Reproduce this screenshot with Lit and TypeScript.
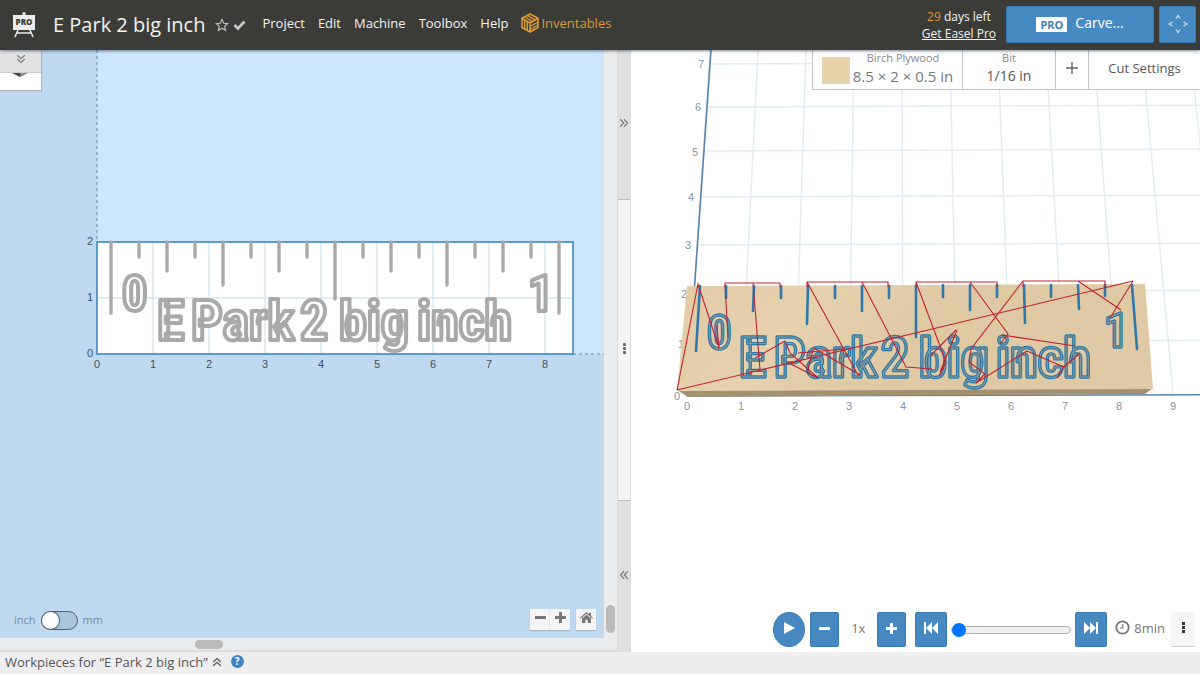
import { LitElement, html, svg, css } from "lit";
import { customElement, property, state } from "lit/decorators.js";

type Line = [number, number, number, number];
type Label = [number, number, string];

const range = (n: number) => Array.from({ length: n }, (_, i) => i);

const chevrons = (turn: number) => html`<svg width="10" height="10" viewBox="0 0 10 10" aria-hidden="true">
  <g transform="rotate(${turn} 5 5)" fill="none" stroke="currentColor" stroke-width="1.2">
    <path d="M1.2 1.2 5 4.6 8.8 1.2M1.2 5 5 8.4 8.8 5" />
  </g>
</svg>`;

/* Flat drawing of the workpiece, 56px to the inch. */
@customElement("design-canvas")
export class DesignCanvas extends LitElement {
  static styles = css`
    :host {
      display: block;
      overflow: hidden;
    }
    svg {
      display: block;
      width: 100%;
      height: 100%;
    }
    .axis {
      font: 11px "Liberation Sans", sans-serif;
      fill: #3d5165;
      text-anchor: middle;
    }
    .letters {
      font-family: "Liberation Sans Narrow", "Roboto Condensed", "Open Sans Condensed", sans-serif;
      font-weight: 700;
      fill: #fff;
      stroke: #a9a9a9;
      stroke-width: 4;
      stroke-linejoin: round;
    }
  `;

  private ticks = [71, 15, 29, 15, 43, 15, 29, 15, 57, 15, 29, 15, 43, 15, 29, 15, 71];
  private words: Label[] = [
    [60, 98, "E"],
    [94, 98, "Park"],
    [203, 98, "2"],
    [242, 98, "big"],
    [320, 98, "inch"],
  ];

  render() {
    return html`<svg role="img" aria-label="Design">
      <g transform="translate(97 192)">
        <rect x="0" y="-192" width="2000" height="304" fill="#cce6fd" />
        <rect x="0" y="0" width="476" height="112" fill="#fff" />
        <path d="M0 56H476" stroke="#c4d9ea" />
        ${range(8).map((i) => svg`<path d="M${(i + 1) * 56} 0V112" stroke="#c4dff2" />`)}
        <path d="M0 -192V0M476 112H2000" fill="none" stroke="#5d8fb8" stroke-dasharray="3 3" />
        <rect x="0" y="0" width="476" height="112" fill="none" stroke="#3f88bd" stroke-width="1.6" />
        ${this.ticks.map(
          (len, i) =>
            svg`<path d="M${14 + i * 28} 0v${len}" stroke="#a9a9a9" stroke-width="3.4" stroke-linecap="round" />`
        )}
        <g class="letters" font-size="56">
          ${this.words.map(([x, y, t]) => svg`<text x=${x} y=${y}>${t}</text>`)}
        </g>
        <g class="letters" font-size="50">
          <text x="25" y="69">0</text>
          <text x="431" y="69">1</text>
        </g>
        <g class="axis">
          ${range(9).map((i) => svg`<text x=${i * 56} y="126">${i}</text>`)}
          ${range(3).map((i) => svg`<text x="-7" y=${115 - i * 56}>${i}</text>`)}
        </g>
      </g>
    </svg>`;
  }
}

/* Perspective view of the stock with its toolpaths. */
@customElement("carve-preview")
export class CarvePreview extends LitElement {
  static styles = css`
    :host {
      display: block;
      overflow: hidden;
    }
    svg {
      display: block;
      width: 100%;
      height: 100%;
    }
    .axis {
      font: 11px "Liberation Sans", sans-serif;
      fill: #8496a9;
      text-anchor: middle;
    }
    .cut,
    .groove {
      font-family: "Liberation Sans Narrow", "Roboto Condensed", "Open Sans Condensed", sans-serif;
      font-weight: 700;
      fill: none;
      stroke-linejoin: round;
    }
    .cut {
      stroke: #2b76a6;
      stroke-width: 3.4;
    }
    .groove {
      stroke: #8a9c9c;
      stroke-width: 1;
    }
  `;

  private rows = [14, 57, 101, 147, 195, 242, 292];
  private sideLabels: Label[] = [
    [70, 18, "7"],
    [67, 61, "6"],
    [64, 106, "5"],
    [60, 151, "4"],
    [57, 199, "3"],
    [53, 248, "2"],
    [50, 298, "1"],
    [46, 350, "0"],
  ];
  private ticks: Line[] = [
    [69, 236, 65, 301],
    [95, 236, 95, 248],
    [123, 236, 122, 261],
    [150, 236, 150, 248],
    [177, 236, 176, 274],
    [204, 236, 204, 248],
    [231, 236, 231, 261],
    [258, 236, 258, 248],
    [285, 236, 285, 287],
    [312, 235, 312, 247],
    [339, 235, 339, 260],
    [366, 235, 366, 247],
    [393, 235, 394, 273],
    [420, 235, 420, 247],
    [447, 235, 448, 259],
    [474, 235, 474, 246],
    [501, 235, 506, 299],
  ];
  private words: Label[] = [
    [108, 327, "E"],
    [143, 327, "Park"],
    [250, 327, "2"],
    [288, 327, "big"],
    [365, 327, "inch"],
  ];
  private moves = [
    "M46 340 67 234 88 298 86 276",
    "M94 238V233H149V237M94 234 97 288M122 233 129 320",
    "M124 308 154 291 159 303 187 328 156 312M167 303 214 299M176 323 182 300",
    "M176 237V232H257V237M176 232 227 325M231 232 275 317 301 319M183 298 229 325",
    "M46 340 502 231",
    "M285 237V232H366V237M285 232 315 312 308 326M325 280 299 306M326 280 309 322",
    "M339 232 377 284 369 294M392 231 340 299 338 312 354 324 345 333 396 301",
    "M392 237V231H474V237M447 231 490 260M502 231 479 268",
    "M371 285 444 296M396 301 433 317 449 303M433 317 426 328",
  ];

  private letters(cls: string) {
    return svg`<g class=${cls} font-size="56">
      ${this.words.map(([x, y, t]) => svg`<text x=${x} y=${y}>${t}</text>`)}
      <g font-size="48">
        <text x="76" y="299">0</text>
        <text x="473" y="297">1</text>
      </g>
    </g>`;
  }

  render() {
    return html`<svg role="img" aria-label="Carve preview">
      <defs>
        <linearGradient id="birch" x1="0" y1="0" x2="1" y2="0.2">
          <stop offset="0" stop-color="#e2cba5" />
          <stop offset="0.3" stop-color="#e6d1ad" />
          <stop offset="0.6" stop-color="#dfc9a3" />
          <stop offset="1" stop-color="#e0caa5" />
        </linearGradient>
      </defs>
      <g fill="none" stroke="#e3ebf3" stroke-width="1.5">
        ${this.rows.map((y, i) => svg`<path d="M${79 - i * 3} ${y}L900 ${y - 3}" />`)}
        ${range(15).map((i) => svg`<path d="M${79 + i * 48} 0L${56 + i * 54} 344" />`)}
      </g>
      <path d="M80 0 56 345M56 346 900 344" fill="none" stroke="#5b83ab" stroke-width="1.6" />
      <g class="axis">
        ${this.sideLabels.map(([x, y, t]) => svg`<text x=${x} y=${y}>${t}</text>`)}
        ${range(10).map((i) => svg`<text x=${56 + i * 54} y="360">${i}</text>`)}
      </g>
      <path d="M46 340 522 338 514 344 57 347Z" fill="#a39170" />
      <path d="M56 236 514 234 522 339 46 341Z" fill="url(#birch)" />
      <g stroke="#2f78ad" stroke-width="2.6" stroke-linecap="round">
        ${this.ticks.map(([a, b, c, d]) => svg`<path d="M${a} ${b}L${c} ${d}" />`)}
      </g>
      ${this.letters("cut")} ${this.letters("groove")}
      <g fill="none" stroke="#c5202e" stroke-width="1.1">
        ${this.moves.map((d) => svg`<path d=${d} />`)}
      </g>
    </svg>`;
  }
}

@customElement("app-header")
export class AppHeader extends LitElement {
  @property() name = "";

  static styles = css`
    :host {
      display: flex;
      align-items: center;
      height: 50px;
      box-sizing: border-box;
      padding: 0 4px 0 12px;
      background: #3b3c38;
      color: #f2f2f2;
      box-shadow: 0 1px 3px rgba(40, 50, 70, 0.6);
      position: relative;
      z-index: 2;
    }
    h1 {
      margin: 0 10px 0 16px;
      font-size: 20px;
      font-weight: 400;
      line-height: 28px;
      white-space: nowrap;
    }
    button {
      font: inherit;
      color: inherit;
      background: none;
      border: 0;
      padding: 0;
      margin: 0;
      cursor: pointer;
    }
    svg {
      display: block;
    }
    .marks {
      display: flex;
      align-items: center;
      gap: 4px;
      color: #c4c5c3;
    }
    nav {
      display: flex;
      gap: 13px;
      margin-left: 16px;
      padding-bottom: 4px;
      font-size: 13px;
      line-height: 20px;
    }
    .brand {
      display: flex;
      align-items: center;
      gap: 2px;
      color: #dc9a35;
      text-decoration: none;
    }
    .trial {
      margin-left: auto;
      text-align: center;
      font-size: 12px;
      line-height: 17px;
      white-space: nowrap;
    }
    .trial b {
      font-weight: 400;
      color: #dc9a35;
    }
    .trial a {
      color: inherit;
      display: block;
    }
    .carve,
    .jog {
      height: 37px;
      background: #468ac4;
      border: 1px solid #3a7ab3;
      border-radius: 2px;
      color: #fff;
      display: flex;
      align-items: center;
      justify-content: center;
      margin-bottom: 2px;
    }
    .carve {
      width: 148px;
      gap: 8px;
      margin-left: 10px;
      font-size: 14px;
      padding-bottom: 3px;
    }
    .jog {
      width: 37px;
      margin-left: 5px;
    }
    .pro {
      background: #fff;
      color: #3b7db8;
      font-size: 11px;
      font-weight: 700;
      line-height: 15px;
      padding: 0 4px;
      border-radius: 1px;
      margin-top: 4px;
    }
  `;

  render() {
    return html`
      <svg width="25" height="26" viewBox="0 0 25 26" aria-label="Easel Pro">
        <path d="M10.500 3V1.500a1.500 1.500 0 0 1 3 0V3H23v15H1V3z" fill="#ececec" />
        <path d="M6 18 3 25M18 18l3 7M5 21H19" stroke="#ececec" stroke-width="1.500" fill="none" />
        <text x="12" y="13" text-anchor="middle" font-size="8" font-weight="800" fill="#3b3c38">PRO</text>
      </svg>
      <h1>${this.name}</h1>
      <div class="marks">
        <button aria-label="Add to favourites">
          <svg width="14" height="14" viewBox="0 0 14 14">
            <path d="M7 1.400 8.700 5.200l4 .4-3 2.700.9 4L7 10.200 3.400 12.300l.9-4-3-2.700 4-.4z" fill="none" stroke="currentColor" stroke-width="1.100" />
          </svg>
        </button>
        <svg width="13" height="14" viewBox="0 0 13 14" role="img" aria-label="Saved">
          <path d="m1.500 7 3.500 3.500 6.500-7" fill="none" stroke="currentColor" stroke-width="2.800" />
        </svg>
      </div>
      <nav>
        ${["Project", "Edit", "Machine", "Toolbox", "Help"].map((m) => html`<button>${m}</button>`)}
        <a class="brand" href="#">
          <svg width="18" height="20" viewBox="0 0 18 20" aria-hidden="true">
            <g fill="none" stroke="currentColor" stroke-width="1.400" stroke-linejoin="round">
              <path d="M9 1 17 5.300v9.200L9 19 1 14.500V5.300zM1 5.300 9 10v9M9 10l8-4.700" stroke-width="1.600" />
              <path d="M3.700 7v9M6.300 8.500v9M9 13.500 17 9M9 16.500l8-4.500M3.800 4 11.500 8.300M6.500 2.500 14.200 6.800" />
            </g>
          </svg>
          Inventables
        </a>
      </nav>
      <div class="trial"><b>29</b> days left <a href="#">Get Easel Pro</a></div>
      <button class="carve"><span class="pro">PRO</span>Carve...</button>
      <button class="jog" aria-label="Jog machine">
        <svg width="20" height="20" viewBox="0 0 20 20">
          <path d="M8 4.500 10 1.500l2 3M8 15.500l2 3 2-3M4.500 8 1 10l3.500 2M15.500 8l3.500 2-3.500 2" fill="none" stroke="#d3e5f5" stroke-width="1.200" />
        </svg>
      </button>
    `;
  }
}

@customElement("app-root")
export class AppRoot extends LitElement {
  @state() private project = "E Park 2 big inch";

  static styles = css`
    :host {
      display: flex;
      flex-direction: column;
      height: 100vh;
      overflow: hidden;
      font-family: "Open Sans", "Noto Sans", sans-serif;
      color: #555;
      background: #fff;
    }
    button {
      font: inherit;
      color: inherit;
      border: 0;
      padding: 0;
      margin: 0;
      cursor: pointer;
      display: flex;
      align-items: center;
      justify-content: center;
    }
    svg {
      display: block;
    }
    main {
      flex: 1;
      min-height: 0;
      display: grid;
      grid-template-columns: 617fr 14px 569fr;
    }
    .editor {
      display: grid;
      grid-template: minmax(0, 1fr) 12px / minmax(0, 1fr) 13px;
      background: #ebecee;
      border-bottom: 2px solid #dcdcdc;
      box-sizing: border-box;
    }
    .stage,
    .preview {
      position: relative;
      min-width: 0;
      min-height: 0;
    }
    .stage {
      background: #bfdaf0;
    }
    .fill {
      width: 100%;
      height: 100%;
    }
    .vbar {
      display: flex;
      flex-direction: column;
      justify-content: flex-end;
      align-items: center;
      padding-bottom: 5px;
    }
    .hbar {
      display: flex;
      align-items: center;
      padding-left: 195px;
    }
    .thumb {
      background: #bbb;
      border-radius: 5px;
    }
    .vbar .thumb {
      width: 9px;
      height: 28px;
    }
    .hbar .thumb {
      width: 28px;
      height: 9px;
    }
    .tray {
      position: absolute;
      left: 0;
      top: 0;
      width: 41px;
      background: #fff;
      box-shadow: 1px 1px 1px #a9b4be;
    }
    .tray button {
      width: 100%;
      height: 23px;
      padding-bottom: 4px;
      background: #e2e2e2;
      color: #777;
      border-bottom: 1px solid #ccc;
    }
    .tray svg.shape {
      margin: 0 12px 13px;
    }
    .units {
      position: absolute;
      left: 14px;
      bottom: 8px;
      display: flex;
      align-items: center;
      gap: 5px;
      font-size: 11px;
      line-height: 20px;
      color: #75899b;
    }
    .units input {
      appearance: none;
      margin: 0;
      width: 37px;
      height: 19px;
      border: 1px solid #51616f;
      border-radius: 10px;
      background: #a9c5db;
      display: flex;
    }
    .units input::before {
      content: "";
      width: 17px;
      height: 17px;
      border-radius: 50%;
      background: #fff;
      box-shadow: 0 0 0 1px #51616f;
    }
    .units input:checked::before {
      margin-left: auto;
    }
    .zoom {
      position: absolute;
      right: 8px;
      bottom: 8px;
      display: flex;
      color: #777;
    }
    .zoom button {
      width: 20px;
      height: 21px;
      padding-bottom: 4px;
      background: #f5f5f5;
      box-shadow: 0 1px 1px #a5b8c8;
    }
    .zoom button:last-child {
      margin-left: 6px;
    }
    .divider {
      display: grid;
      grid-template-rows: 150fr 300fr 152fr;
      background: #f4f4f4;
      border-right: 1px solid #ddd;
      border-left: 1px solid #ddd;
      box-sizing: border-box;
      min-height: 0;
    }
    .divider button {
      background: #dfdfdf;
      color: #777;
      padding-bottom: 4px;
    }
    .divider button:first-child {
      border-bottom: 1px solid #bbb;
    }
    .divider button:last-child {
      border-top: 1px solid #bbb;
    }
    .grip {
      display: flex;
      flex-direction: column;
      align-items: center;
      justify-content: center;
      gap: 1px;
      padding-bottom: 4px;
    }
    .grip i {
      width: 3px;
      height: 3px;
      border-radius: 1px;
      background: #666;
    }
    .setup {
      position: absolute;
      top: 0;
      right: 0;
      height: 40px;
      box-sizing: border-box;
      display: grid;
      grid-template-columns: 150px 93px 33px 111px;
      background: #fff;
      border: 1px solid #c4c4c4;
      border-width: 0 0 1px 1px;
    }
    .setup button {
      background: none;
      border-right: 1px solid #c4c4c4;
      font-size: 13px;
      padding-bottom: 4px;
    }
    .setup button:last-child {
      border-right: 0;
    }
    .setup .material,
    .setup .bit {
      padding: 0;
    }
    .setup .material {
      gap: 3px;
      color: #777;
    }
    .material .pair {
      font-size: 15px;
    }
    .swatch {
      width: 28px;
      height: 27px;
      background: #e6d3aa;
    }
    .pair {
      display: flex;
      flex-direction: column;
      font-size: 14px;
      line-height: 20px;
      padding-bottom: 4px;
      white-space: nowrap;
    }
    .pair small {
      font-size: 11px;
      line-height: 16px;
      color: #888;
    }
    .player {
      position: absolute;
      right: 5px;
      bottom: 5px;
      display: flex;
      align-items: center;
      color: #777;
      font-size: 13px;
    }
    .player button {
      height: 35px;
      padding-bottom: 3px;
      box-sizing: border-box;
      background: #4689c2;
      border: 1px solid #3b7cb5;
      border-radius: 2px;
      color: #fff;
    }
    .player .play {
      width: 32px;
      border-radius: 50%;
      margin-right: 5px;
    }
    .player .step {
      width: 29px;
    }
    .player .skip {
      width: 32px;
    }
    .speed {
      width: 38px;
      text-align: center;
      padding-bottom: 3px;
    }
    .player .back {
      margin-left: 9px;
    }
    .player input {
      appearance: none;
      width: 120px;
      height: 14px;
      margin: 0 4px;
      background: none;
    }
    .player input::-webkit-slider-runnable-track {
      height: 8px;
      box-sizing: border-box;
      border: 1px solid #b2b2b2;
      border-radius: 4px;
      background: #efefef;
    }
    .player input::-webkit-slider-thumb {
      appearance: none;
      width: 14px;
      height: 14px;
      margin-top: -4px;
      border-radius: 50%;
      background: #0075ff;
    }
    .time {
      display: flex;
      align-items: center;
      gap: 4px;
      margin: 0 6px 0 8px;
      padding-bottom: 4px;
      font-size: 13px;
    }
    .player .more {
      width: 24px;
      background: #f5f5f5;
      border: 0;
      border-bottom: 1px solid #ccc;
      color: #333;
    }
    footer {
      height: 22px;
      box-sizing: border-box;
      display: flex;
      align-items: center;
      gap: 4px;
      padding: 0 5px 3px;
      background: #eee;
      font-size: 13px;
      line-height: 18px;
    }
    footer button {
      background: none;
    }
    footer .help {
      width: 13px;
      height: 13px;
      border-radius: 50%;
      background: #3f82c0;
      color: #fff;
      font-size: 10px;
      font-weight: 700;
      line-height: 13px;
      margin-left: 5px;
    }
  `;

  render() {
    const bar = svg`<path d="M0 4h11v3H0z" />`;
    const plus = svg`<path d="M4 0h3v4h4v3H7v4H4V7H0V4h4z" />`;
    return html`
      <app-header .name=${this.project}></app-header>
      <main>
        <section class="editor">
          <div class="stage">
            <design-canvas class="fill"></design-canvas>
            <div class="tray">
              <button aria-label="Show shapes">${chevrons(0)}</button>
              <svg class="shape" width="16" height="4" viewBox="0 0 16 4" aria-hidden="true">
                <path d="M0 0H8L11 2 8 4z" fill="#444" />
                <path d="M16 0H10L8 2v2z" fill="#888" />
              </svg>
            </div>
            <div class="units">
              <label for="unit">inch</label>
              <input id="unit" type="checkbox" role="switch" />
              <label for="unit">mm</label>
            </div>
            <div class="zoom">
              <button aria-label="Zoom out"><svg width="11" height="11" fill="currentColor">${bar}</svg></button>
              <button aria-label="Zoom in"><svg width="11" height="11" fill="currentColor">${plus}</svg></button>
              <button aria-label="Reset view">
                <svg width="13" height="11" viewBox="0 0 13 11" fill="currentColor">
                  <path d="M6.500 0 9 2.200V.7h2v3.200l2 1.800-.8.9L6.500 1.700.8 6.600 0 5.700z" />
                  <path d="M6.500 2.800 11 6.600V11H7.700V7.700H5.300V11H2V6.600z" />
                </svg>
              </button>
            </div>
          </div>
          <div class="vbar"><div class="thumb"></div></div>
          <div class="hbar"><div class="thumb"></div></div>
        </section>
        <div class="divider">
          <button aria-label="Expand design">${chevrons(-90)}</button>
          <div class="grip"><i></i><i></i><i></i></div>
          <button aria-label="Expand preview">${chevrons(90)}</button>
        </div>
        <section class="preview">
          <carve-preview class="fill"></carve-preview>
          <div class="setup">
            <button class="material">
              <span class="swatch"></span>
              <span class="pair"><small>Birch Plywood</small>8.5 × 2 × 0.5 in</span>
            </button>
            <button class="bit"><span class="pair"><small>Bit</small>1/16 in</span></button>
            <button aria-label="Add bit">
              <svg width="12" height="12"><path d="M6 0V12M0 6H12" stroke="#666" stroke-width="1.400" /></svg>
            </button>
            <button>Cut Settings</button>
          </div>
          <div class="player">
            <button class="play" aria-label="Play">
              <svg width="11" height="12" fill="currentColor"><path d="M0 0 11 6 0 12z" /></svg>
            </button>
            <button class="step" aria-label="Slower"><svg width="11" height="11" fill="currentColor">${bar}</svg></button>
            <span class="speed">1x</span>
            <button class="step" aria-label="Faster"><svg width="11" height="11" fill="currentColor">${plus}</svg></button>
            <button class="skip back" aria-label="To start">
              <svg width="14" height="12" fill="currentColor"><path d="M0 0h2v12H0zM8 0v12L2 6zM14 0v12L8 6z" /></svg>
            </button>
            <input type="range" min="0" max="100" value="0" aria-label="Simulation position" />
            <button class="skip" aria-label="To end">
              <svg width="14" height="12" fill="currentColor"><path d="M12 0h2v12h-2zM6 0v12l6-6zM0 0v12l6-6z" /></svg>
            </button>
            <span class="time">
              <svg width="15" height="15" viewBox="0 0 15 15" fill="none" stroke="currentColor">
                <circle cx="7.500" cy="7.500" r="6.200" stroke-width="1.800" />
                <path d="M7.800 4V8H4.800" stroke-width="1.200" />
              </svg>
              8min
            </span>
            <button class="more" aria-label="More">
              <svg width="3" height="11" fill="currentColor"><path d="M0 0h3v3H0zM0 4h3v3H0zM0 8h3v3H0z" /></svg>
            </button>
          </div>
        </section>
      </main>
      <footer>
        Workpieces for “${this.project}”
        <button aria-label="Show workpieces">${chevrons(180)}</button>
        <button class="help" aria-label="Help">?</button>
      </footer>
    `;
  }
}
